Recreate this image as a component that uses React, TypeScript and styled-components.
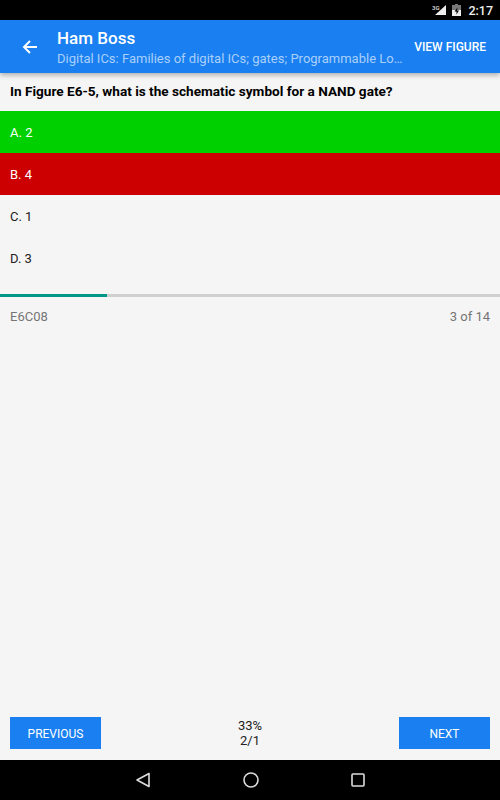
import React from 'react';
import styled, { createGlobalStyle } from 'styled-components';

const GlobalStyle = createGlobalStyle`
    html, body {
        margin: 0;
        padding: 0;
        background: #f5f5f5;
    }
    * {
        box-sizing: border-box;
    }
`;

const Screen = styled.div`
    display: flex;
    flex-direction: column;
    width: 500px;
    height: 800px;
    overflow: hidden;
    background: #f5f5f5;
    font-family: Roboto, "Liberation Sans", sans-serif;
`;

const StatusBar = styled.div`
    display: flex;
    align-items: center;
    justify-content: flex-end;
    gap: 6px;
    height: 20px;
    padding-right: 7px;
    background: #000;
    color: #fff;
`;

const Clock = styled.span`
    margin-left: 1px;
    font-size: 12.5px;
    font-weight: 500;
    color: #eee;
`;

const AppBar = styled.header`
    position: relative;
    z-index: 1;
    display: flex;
    align-items: center;
    height: 53px;
    padding: 0 14px 0 22px;
    background: #1a7ff0;
    box-shadow: 0 2px 5px rgba(0, 0, 0, 0.3);
`;

const BackButton = styled.div`
    display: flex;
    width: 35px;
    flex-shrink: 0;
`;

const Titles = styled.div`
    flex: 1;
    min-width: 0;
`;

const Title = styled.div`
    padding-top: 1px;
    font-size: 17px;
    line-height: 22px;
    font-weight: 500;
    color: #fff;
`;

const Subtitle = styled.div`
    font-size: 13px;
    line-height: 19px;
    white-space: nowrap;
    color: #a9cffa;
`;

const AppBarAction = styled.div`
    flex-shrink: 0;
    font-size: 12px;
    font-weight: 500;
    color: #fff;
`;

const Question = styled.div`
    height: 38px;
    padding: 10px 10px 0;
    font-size: 13.6px;
    line-height: 17px;
    font-weight: 700;
    color: #000;
`;

const Answer = styled.div<{ $state?: 'correct' | 'wrong' }>`
    display: flex;
    align-items: center;
    height: 42px;
    padding-left: 10px;
    font-size: 13px;
    color: ${props => (props.$state ? '#fff' : '#222')};
    background: ${props =>
        props.$state === 'correct' ? '#00d000' : props.$state === 'wrong' ? '#cc0000' : 'transparent'};
`;

const ProgressTrack = styled.div`
    height: 3px;
    margin-top: 15px;
    background: #d0d0d0;
`;

const ProgressFill = styled.div`
    height: 100%;
    background: #009688;
`;

const MetaRow = styled.div`
    display: flex;
    justify-content: space-between;
    padding: 11px 10px 0;
    font-size: 13px;
    line-height: 17px;
    color: #757575;
`;

const Spacer = styled.div`
    flex: 1;
`;

const Footer = styled.div`
    display: flex;
    align-items: center;
    justify-content: space-between;
    height: 32px;
    margin-bottom: 11px;
    padding: 0 10px;
`;

const NavButton = styled.div`
    display: flex;
    align-items: center;
    justify-content: center;
    width: 91px;
    height: 32px;
    padding-top: 1px;
    font-size: 12px;
    color: #fff;
    background: #1a7ff0;
`;

const Score = styled.div`
    font-size: 13px;
    line-height: 15px;
    text-align: center;
    color: #222;
`;

const SystemNav = styled.div`
    display: flex;
    align-items: center;
    justify-content: center;
    gap: 92px;
    height: 40px;
    padding-right: 1px;
    background: #000;
`;

const answers = [
    { label: 'A. 2', state: 'correct' as const },
    { label: 'B. 4', state: 'wrong' as const },
    { label: 'C. 1' },
    { label: 'D. 3' },
];

const progress = (3 / 14) * 100;

export default function App() {
    return (
        <Screen>
            <GlobalStyle />
            <StatusBar>
                <svg width="14" height="12" viewBox="0 0 14 12">
                    <path d="M14 1v10H3z" fill="#eee" />
                    <text x="0" y="5.5" fontSize="6" fontWeight="700" fill="#ccc" fontFamily="Roboto, sans-serif">3G</text>
                </svg>
                <svg width="9" height="12" viewBox="0 0 9 12">
                    <path d="M3 0h3v1h3v11H0V1h3z" fill="#777" />
                    <path d="M0 6h9v6H0z" fill="#eee" />
                    <path d="M5.5 3.5L2.5 7.5h2v3L7 6.500H5z" fill="#000" />
                </svg>
                <Clock>2:17</Clock>
            </StatusBar>
            <AppBar>
                <BackButton>
                    <svg width="16" height="16" viewBox="0 0 16 16" fill="none" stroke="#fff" strokeWidth="2">
                        <path d="M15 8H2M8 2L2 8l6 6" />
                    </svg>
                </BackButton>
                <Titles>
                    <Title>Ham Boss</Title>
                    <Subtitle>Digital ICs: Families of digital ICs; gates; Programmable Lo…</Subtitle>
                </Titles>
                <AppBarAction>VIEW FIGURE</AppBarAction>
            </AppBar>
            <Question>In Figure E6-5, what is the schematic symbol for a NAND gate?</Question>
            {answers.map(answer => (
                <Answer key={answer.label} $state={answer.state}>
                    {answer.label}
                </Answer>
            ))}
            <ProgressTrack>
                <ProgressFill style={{ width: `${progress}%` }} />
            </ProgressTrack>
            <MetaRow>
                <span>E6C08</span>
                <span>3 of 14</span>
            </MetaRow>
            <Spacer />
            <Footer>
                <NavButton>PREVIOUS</NavButton>
                <Score>
                    33%
                    <br />
                    2/1
                </Score>
                <NavButton>NEXT</NavButton>
            </Footer>
            <SystemNav>
                <svg width="16" height="16" viewBox="0 0 16 16" fill="none" stroke="#ddd" strokeWidth="1.6" strokeLinejoin="round">
                    <path d="M14 1.5v13L2 8z" />
                </svg>
                <svg width="16" height="16" viewBox="0 0 16 16" fill="none" stroke="#ddd" strokeWidth="1.6">
                    <circle cx="8" cy="8" r="7" />
                </svg>
                <svg width="14" height="14" viewBox="0 0 14 14" fill="none" stroke="#ddd" strokeWidth="1.6">
                    <rect x="1" y="1" width="12" height="12" rx="1" />
                </svg>
            </SystemNav>
        </Screen>
    );
}
